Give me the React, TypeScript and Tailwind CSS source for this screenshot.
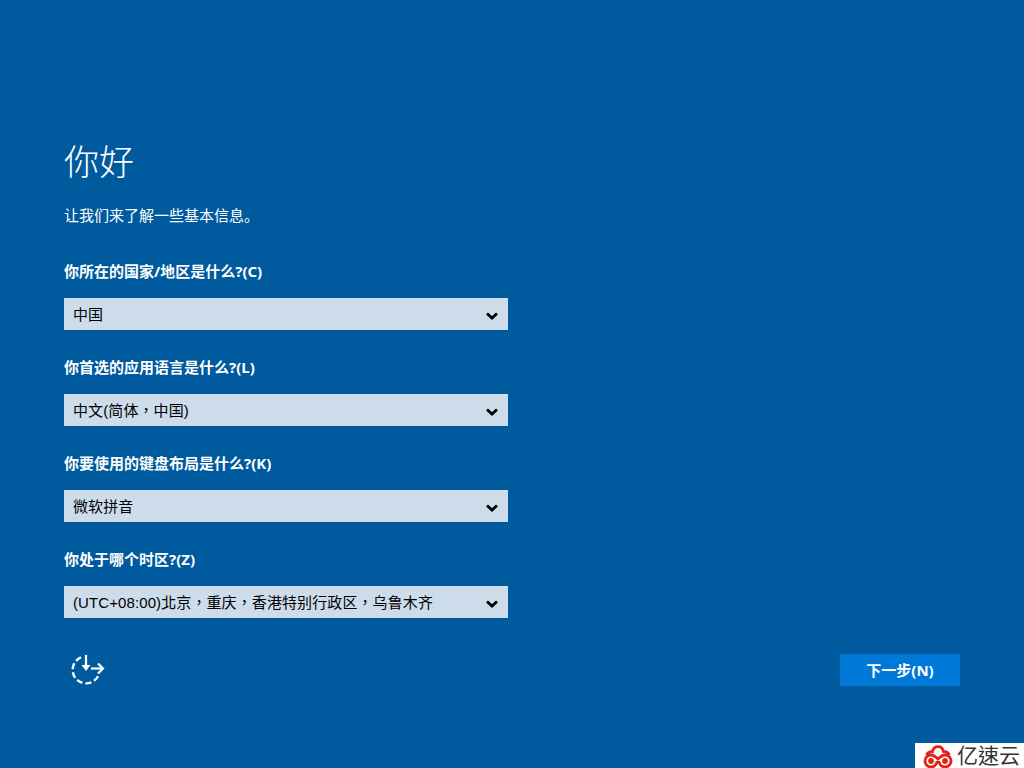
const FIELDS = [
  { label: "你所在的国家/地区是什么?(C)", value: "中国" },
  { label: "你首选的应用语言是什么?(L)", value: "中文(简体，中国)" },
  { label: "你要使用的键盘布局是什么?(K)", value: "微软拼音" },
  { label: "你处于哪个时区?(Z)", value: "(UTC+08:00)北京，重庆，香港特别行政区，乌鲁木齐" },
];

function Chevron() {
  return (
    <svg className="mt-[3px]" width="12" height="8" viewBox="0 0 12 8" fill="none">
      <path d="M1 1.5 L6 6 L11 1.5" stroke="#000" strokeWidth="2.8" />
    </svg>
  );
}

function SetupIcon() {
  return (
    <svg width="36" height="32" viewBox="0 0 36 32" fill="none" stroke="#fff" strokeWidth="2.4">
      <path d="M10 3.4 A13.5 13.5 0 1 0 28 20" strokeDasharray="6 3" />
      <path d="M15 1 V13" strokeWidth="2.2" />
      <path d="M10.5 11 H19.5 L15 17 Z" fill="#fff" stroke="none" />
      <path d="M20 14.5 H31" strokeWidth="2.2" />
      <path d="M27 9.5 L32 14.5 L27 19.5" strokeWidth="2.2" />
    </svg>
  );
}

function CloudLogo() {
  return (
    <svg width="30" height="24" viewBox="0 0 30 24" fill="none" stroke="#e2231a" strokeWidth="2.8">
      <path d="M3.5 11 C5 8.5 7 7.5 9.5 7.5 C11 1 19 1 20.5 7.5 C23 7.5 25 8.5 26.5 11" />
      <path d="M14 17 A6 6 0 1 1 8 11 C11 11 13 13 15 15 C17 13 19 11 22 11 A6 6 0 1 1 16 17" />
      <circle cx="8" cy="17" r="1.5" />
      <circle cx="22" cy="17" r="1.5" />
    </svg>
  );
}

export default function App() {
  return (
    <div className="relative h-[768px] w-[1024px] overflow-hidden bg-[#005a9e] font-['Noto_Sans','Noto_Sans_CJK_TC',sans-serif] text-white">
      <div className="flex flex-col pl-[64px] pr-[64px] pt-[139px]">
        <h1 className="h-[46px] text-[35px] font-light leading-[46px]">你好</h1>
        <p className="mt-[20px] h-[20px] font-['Noto_Sans_CJK_SC',sans-serif] text-[15px] leading-[20px]">让我们来了解一些基本信息。</p>

        <div className="mt-[36px] flex flex-col gap-[27px]">
          {FIELDS.map((field) => (
            <div key={field.label} className="flex flex-col">
              <label className="h-[20px] text-[15px] font-bold leading-[20px]">{field.label}</label>
              <div className="mt-[17px] flex h-[32px] w-[444px] items-center justify-between bg-[#cddcea] pl-[9px] pr-[10px] font-['Liberation_Sans','Noto_Sans_CJK_TC',sans-serif] text-[15px] tracking-[0.1px] text-black">
                <span className="pt-[2px]">{field.value}</span>
                <Chevron />
              </div>
            </div>
          ))}
        </div>

        <div className="mt-[36px] flex items-center justify-between">
          <div className="pl-[7px]">
            <SetupIcon />
          </div>
          <button className="h-[32px] w-[120px] bg-[#0078d7] text-[15px] font-bold text-white">下一步(N)</button>
        </div>
      </div>

      <div className="absolute bottom-0 right-0 flex h-[25px] w-[109px] items-center gap-[4px] bg-white pl-[8px]">
        <CloudLogo />
        <span className="text-[21px] leading-[25px] text-[#333]">亿速云</span>
      </div>
    </div>
  );
}
